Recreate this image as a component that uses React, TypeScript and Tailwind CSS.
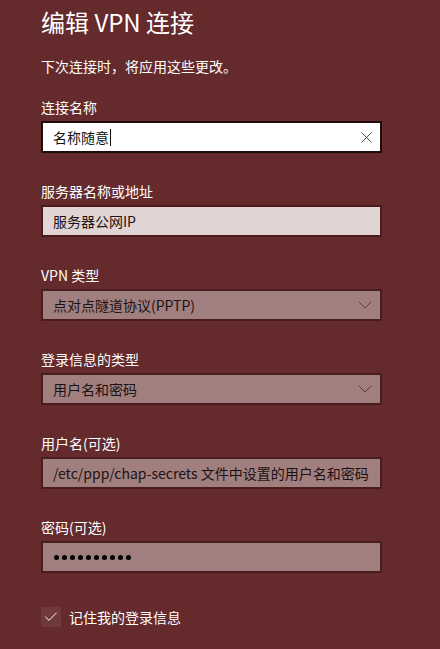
import { Check, ChevronDown, X } from 'lucide-react'

const font = "font-['Segoe_UI','Noto_Sans_CJK_SC',sans-serif]"

function Label({ children }: { children: React.ReactNode }) {
  return <div className="h-5 text-[14px] leading-5 text-white">{children}</div>
}

function SelectBox({ value }: { value: string }) {
  return (
    <div className="mt-1 flex h-8 w-[341px] items-center justify-between border-2 border-[#4b1c1d] bg-[#a17f7f] pl-[10px] pr-[3px] text-[14px] text-[#1c1212]">
      <span>{value}</span>
      <ChevronDown className="h-6 w-6 text-[#5e3a3b]" strokeWidth={1} />
    </div>
  )
}

export default function App() {
  return (
    <div className={`${font} min-h-[649px] w-[440px] bg-[#652a2b] pl-[41px] pt-[4px]`}>
      <h1 className="h-9 text-[24px] leading-9 text-white">编辑 VPN 连接</h1>
      <p className="mt-4 h-5 text-[14px] leading-5 text-white">下次连接时，将应用这些更改。</p>

      <div className="mt-[21px]">
        <Label>连接名称</Label>
        <div className="mt-1 flex h-8 w-[341px] items-center justify-between border-2 border-[#1e0d0d] bg-white pl-[10px] pr-[4px] text-[14px] text-[#111]">
          <span className="flex items-center">
            名称随意
            <span className="ml-px h-[17px] w-px bg-[#111]" />
          </span>
          <X className="h-[19px] w-[19px] text-[#333]" strokeWidth={1.1} />
        </div>
      </div>

      <div className="mt-7">
        <Label>服务器名称或地址</Label>
        <div className="mt-1 flex h-8 w-[341px] items-center border-2 border-[#4b1c1d] bg-[#e0d4d4] pl-[10px] text-[14px] text-[#1c1212]">
          服务器公网IP
        </div>
      </div>

      <div className="mt-7">
        <Label>VPN 类型</Label>
        <SelectBox value="点对点隧道协议(PPTP)" />
      </div>

      <div className="mt-7">
        <Label>登录信息的类型</Label>
        <SelectBox value="用户名和密码" />
      </div>

      <div className="mt-7">
        <Label>用户名(可选)</Label>
        <div className="mt-1 flex h-8 w-[341px] items-center border-2 border-[#4b1c1d] bg-[#a17f7f] pl-[10px] text-[14px] text-[#1c1212]">
          /etc/ppp/chap-secrets 文件中设置的用户名和密码
        </div>
      </div>

      <div className="mt-7">
        <Label>密码(可选)</Label>
        <div className="mt-1 flex h-8 w-[341px] items-center gap-[3px] border-2 border-[#4b1c1d] bg-[#a17f7f] pl-[11px]">
          {Array.from({ length: 10 }).map((_, i) => (
            <span key={i} className="h-[5px] w-[5px] rounded-full bg-black" />
          ))}
        </div>
      </div>

      <div className="mt-[34px] flex items-center gap-2">
        <div className="flex h-5 w-5 items-center justify-center bg-[#70393a]">
          <Check className="h-4 w-4 text-white" strokeWidth={1.5} />
        </div>
        <span className="text-[14px] leading-5 text-white">记住我的登录信息</span>
      </div>
    </div>
  )
}
